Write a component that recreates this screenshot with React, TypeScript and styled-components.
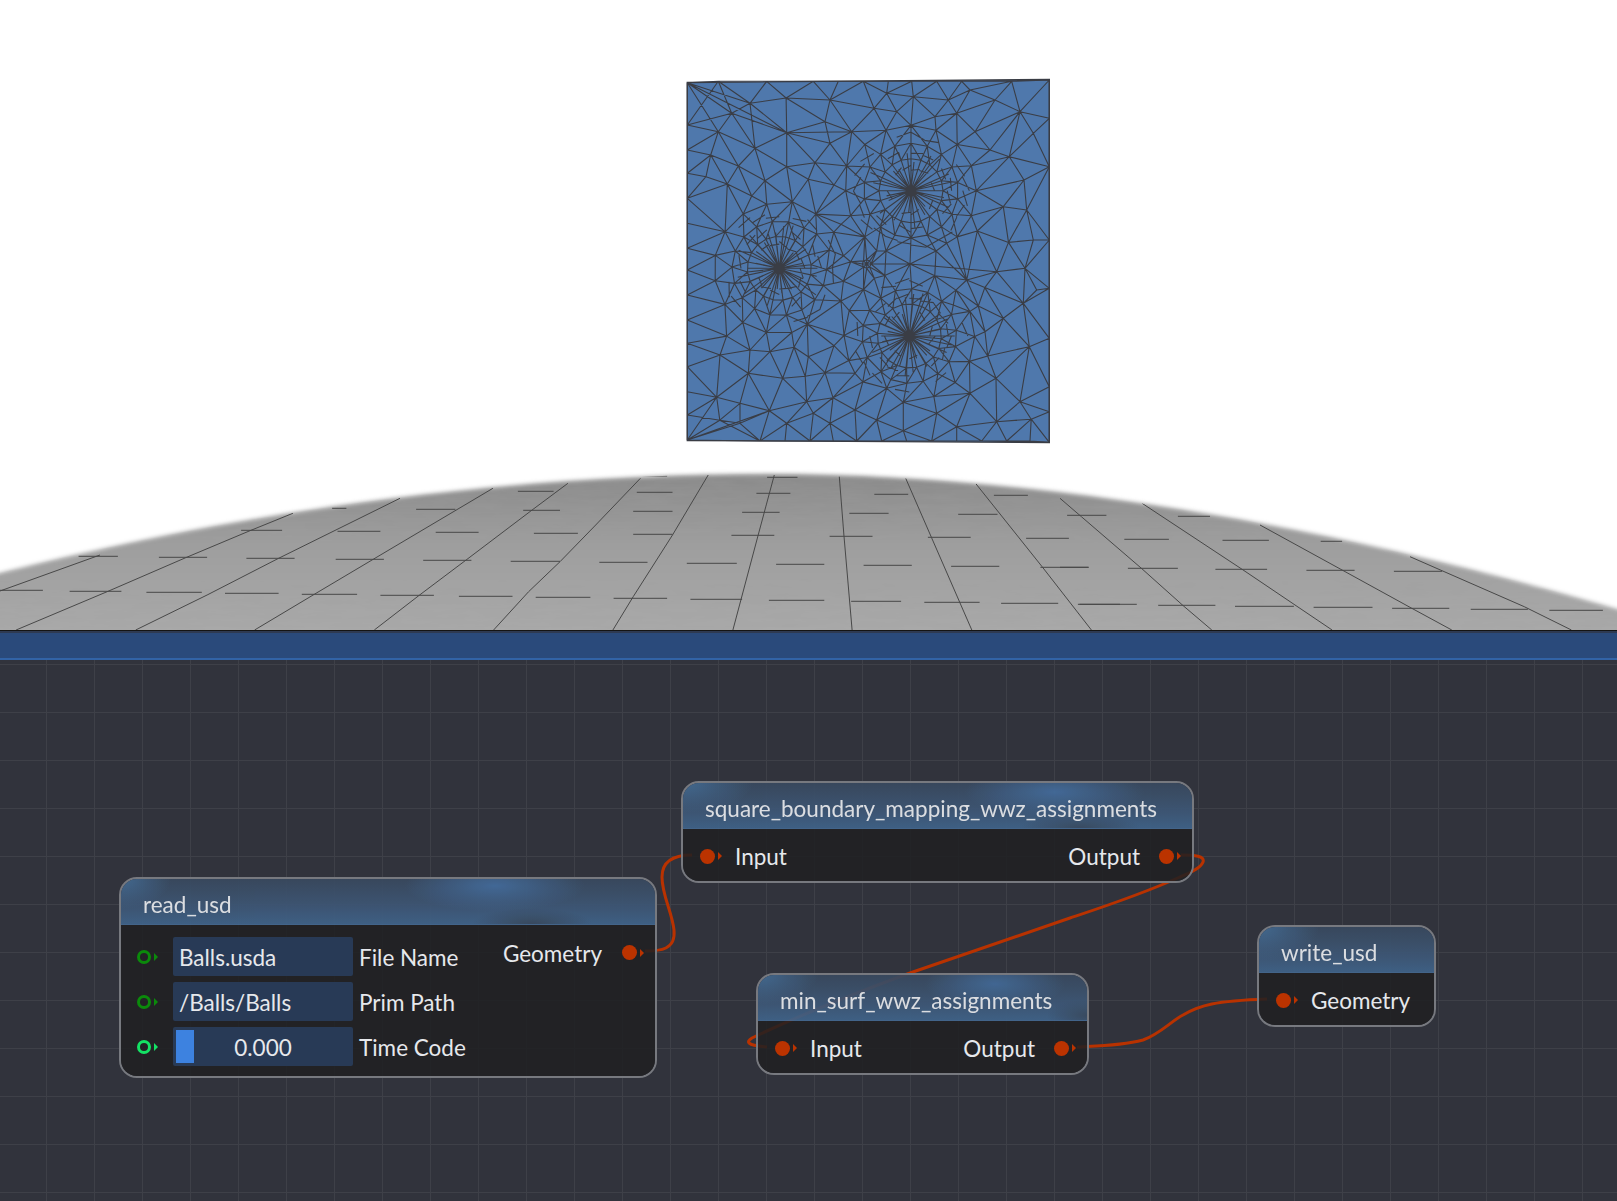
import React from "react";
import styled, { createGlobalStyle } from "styled-components";

const GlobalStyle = createGlobalStyle`
  html, body { margin: 0; padding: 0; background: #fff; }
  body { font-family: Lato, "Open Sans", sans-serif; overflow: hidden; }
`;

/* ---------- mesh generation (zoom coordinates: 0-1200 maps to a 400px crop) ---------- */
type P = [number, number];
const toX = (u: number) => 670 + u / 3;
const toY = (v: number) => 60 + v / 3;

function rng(seed: number) {
  let s = seed;
  return () => {
    s = (s * 16807) % 2147483647;
    return (s - 1) / 2147483646;
  };
}

const corners: P[] = [[52, 68], [1138, 60], [1138, 1147], [52, 1140]];
const hubs: P[] = [[723, 392], [328, 625], [718, 828]];
const manual: P[] = [
  [185,160],[350,218],[145,215],[255,265],[350,320],[480,120],[465,185],[240,130],[205,318],[122,285],[108,350],[172,372],
  [245,408],[285,362],[367,425],[415,358],[492,375],[435,308],[530,318],[480,250],[545,215],[650,100],[612,145],[680,155],
  [835,120],[975,120],[1050,155],[1018,290],[1062,360],[1070,450],[1000,440],[922,513],[830,550],[980,635],[1065,625],
  [1060,730],[1000,775],[890,660],[925,738],[850,735],[1078,860],[945,815],[953,888],[978,955],[1050,1025],[410,1025],
  [298,1052],[210,1030],[140,1012],[338,955],[235,940],[372,862],[415,890],[300,875],[240,870],[150,885],[412,793],
  [492,857],[465,938],[555,940],[633,935],[650,985],[700,1027],[555,1050],[430,1060],[480,1090],[350,1090],[210,1090],
  [700,1112],[513,493],[720,612],[513,723],[590,612],[620,572],[613,655],[542,605],[440,522],[478,570],[915,215],[860,160],
  [795,170],[730,110],[900,90],[1090,220],[960,270],[1090,540],[1100,690],[900,1000],[800,1060],[620,1080],[980,1085],[860,1100],
];
const edges: P[] = [
  ...[195,270,340,415,490,565,630,705,780,850,920,995,1065].map((v) => [52, v] as P),
  ...[145,290,430,505,580,655,725,800,875,1025].map((u) => [u, 64] as P),
  ...[175,320,540,685,835,980,1055].map((v) => [1138, v] as P),
  ...[270,345,420,490,560,635,710,785,860,935,1010,1080].map((u) => [u, 1143] as P),
];

function buildPoints(): P[] {
  const out: P[] = [...corners, ...hubs];
  const add = (p: P, d: number) => {
    for (const q of out) if (Math.hypot(p[0] - q[0], p[1] - q[1]) < d) return;
    out.push(p);
  };
  edges.forEach((p) => add(p, 10));
  manual.forEach((p) => add(p, 22));
  hubs.forEach((h, i) => {
    [[96, 20], [142, 18], [196, 16]].forEach(([r, n], ri) => {
      for (let k = 0; k < n; k++) {
        const a = ((k + (ri % 2) * 0.5) / n) * Math.PI * 2 + i * 0.2;
        add([h[0] + Math.cos(a) * r, h[1] + Math.sin(a) * r], 26);
      }
    });
  });
  for (let k = 0; k < 8; k++) {
    const a = (k / 8) * Math.PI * 2;
    add([590 + Math.cos(a) * 13, 612 + Math.sin(a) * 13], 6);
  }
  const r = rng(77);
  for (let v = 100; v < 1120; v += 66) {
    for (let u = 90; u < 1110; u += 66) {
      add([u + (r() - 0.5) * 30, v + (r() - 0.5) * 30], 58);
    }
  }
  return out;
}

function delaunay(pts: P[]): [number, number, number][] {
  const all: P[] = [...pts, [-5000, -5000], [7000, -5000], [600, 8000]];
  const n = pts.length;
  let tris: [number, number, number][] = [[n, n + 1, n + 2]];
  const inCircle = (t: [number, number, number], p: P) => {
    const [ax, ay] = all[t[0]];
    const [bx, by] = all[t[1]];
    const [cx, cy] = all[t[2]];
    const d = 2 * (ax * (by - cy) + bx * (cy - ay) + cx * (ay - by));
    const ux = ((ax * ax + ay * ay) * (by - cy) + (bx * bx + by * by) * (cy - ay) + (cx * cx + cy * cy) * (ay - by)) / d;
    const uy = ((ax * ax + ay * ay) * (cx - bx) + (bx * bx + by * by) * (ax - cx) + (cx * cx + cy * cy) * (bx - ax)) / d;
    return Math.hypot(p[0] - ux, p[1] - uy) < Math.hypot(ax - ux, ay - uy);
  };
  pts.forEach((p, i) => {
    const bad = tris.filter((t) => inCircle(t, p));
    const count = new Map<string, [number, number]>();
    const seen = new Map<string, number>();
    bad.forEach((t) => {
      ([[t[0], t[1]], [t[1], t[2]], [t[2], t[0]]] as [number, number][]).forEach(([a, b]) => {
        const key = a < b ? `${a}-${b}` : `${b}-${a}`;
        seen.set(key, (seen.get(key) || 0) + 1);
        count.set(key, [a, b]);
      });
    });
    tris = tris.filter((t) => !bad.includes(t));
    seen.forEach((c, key) => {
      if (c === 1) {
        const [a, b] = count.get(key)!;
        tris.push([a, b, i]);
      }
    });
  });
  return tris.filter((t) => t.every((v) => v < n));
}

function meshPath(): string {
  const pts = buildPoints();
  const tris = delaunay(pts);
  const done = new Set<string>();
  let d = "";
  const line = (a: P, b: P) => {
    d += `M${toX(a[0]).toFixed(1)} ${toY(a[1]).toFixed(1)}L${toX(b[0]).toFixed(1)} ${toY(b[1]).toFixed(1)}`;
  };
  tris.forEach((t) => {
    ([[t[0], t[1]], [t[1], t[2]], [t[2], t[0]]] as [number, number][]).forEach(([a, b]) => {
      const key = a < b ? `${a}-${b}` : `${b}-${a}`;
      if (done.has(key)) return;
      done.add(key);
      line(pts[a], pts[b]);
    });
  });
  /* dense spokes round the three hubs, crossed by broken zig-zag rings */
  const r = rng(901);
  hubs.forEach((h) => {
    for (let k = 0; k < 30; k++) {
      const a = (k / 30) * Math.PI * 2;
      const len = 62 + r() * 76;
      line(h, [h[0] + Math.cos(a) * len, h[1] + Math.sin(a) * len]);
    }
    [[72, 16], [118, 20], [165, 24]].forEach(([rad, n]) => {
      for (let k = 0; k < n; k++) {
        if (r() < 0.4) continue;
        const a = (k / n) * Math.PI * 2;
        const b = ((k + 1) / n) * Math.PI * 2;
        const r1 = rad + (r() - 0.5) * 22;
        const r2 = rad + (r() - 0.5) * 22;
        line([h[0] + Math.cos(a) * r1, h[1] + Math.sin(a) * r1], [h[0] + Math.cos(b) * r2, h[1] + Math.sin(b) * r2]);
      }
    });
  });
  const fans: [P, P][] = [
    [[52, 68], [185, 160]], [[52, 68], [145, 215]], [[52, 68], [240, 130]], [[52, 68], [350, 218]],
    [[52, 1140], [140, 1012]], [[52, 1140], [210, 1090]], [[52, 1140], [298, 1052]], [[1138, 60], [1050, 155]],
    [[590, 612], [720, 612]], [[720, 612], [980, 635]], [[350, 218], [350, 320]],
    [[350, 218], [185, 160]], [[350, 218], [540, 215]], [[922, 513], [980, 635]], [[980, 635], [1065, 625]],
  ];
  fans.forEach(([a, b]) => line(a, b));
  return d;
}

const MESH = meshPath();

/* ---------- ground ---------- */
const groundTop = "M-20 578 L0 573 C 250 510 510 474 770 474 C 1040 474 1340 528 1617 609 L1640 616 L1640 650 L-20 650 Z";

const poly = (off: number, pts: number[][]) =>
  "M" + pts.map(([x, y]) => `${(off + x / 2.8).toFixed(1)} ${(460 + y / 3).toFixed(1)}`).join("L");

const GROUND_LINES = [
  poly(0, [[0,393],[280,285]]),
  poly(0, [[45,510],[300,395],[520,293],[700,212],[820,160]]),
  poly(0, [[380,510],[580,405],[780,295],[1120,115]]),
  poly(0, [[713,510],[880,403],[1045,298],[1380,85]]),
  poly(0, [[1048,510],[1175,405],[1305,300],[1490,150],[1590,70]]),
  poly(0, [[1382,510],[1480,395],[1568,305]]),
  poly(560, [[0,305],[100,195],[225,55]]),
  poly(560, [[148,510],[205,410],[315,225],[415,45]]),
  poly(560, [[484,510],[555,225],[600,45]]),
  poly(560, [[818,510],[795,225],[782,50]]),
  poly(560, [[1153,510],[1040,232],[968,55]]),
  poly(560, [[1488,510],[1350,320],[1165,72]]),
  poly(1060, [[425,510],[345,437],[228,325],[60,170],[0,115]]),
  poly(1060, [[762,510],[510,328],[230,130]]),
  poly(1060, [[1097,510],[985,445],[790,330],[560,195]]),
  poly(1060, [[1432,510],[1300,440],[980,290]]),
].join("");

const tick = (off: number, rows: number[][]) =>
  rows.map(([a, b, y]) => `M${(off + a / 2.8).toFixed(1)} ${(460 + y / 3).toFixed(1)}H${(off + b / 2.8).toFixed(1)}`).join("");

const GROUND_TICKS =
  tick(0, [
    [0,120,391],[195,340,394],[410,565,397],[630,780,400],[845,1000,403],[1065,1215,406],[1285,1435,409],[1500,1568,412],
    [220,330,289],[445,580,292],[690,825,295],[940,1075,298],[1185,1320,301],[1430,1568,304],
    [675,790,211],[945,1065,214],[1220,1340,217],[1495,1568,220],
    [930,970,145],[1165,1275,148],[1465,1568,151],[1450,1550,94],
  ]) +
  tick(560, [
    [0,85,412],[150,300,415],[365,510,418],[585,740,421],[815,955,424],[1020,1175,427],[1235,1395,430],[1455,1568,433],
    [110,245,307],[355,495,310],[605,740,313],[850,985,316],[1095,1230,319],[1345,1480,322],
    [0,50,220],[205,315,223],[480,600,226],[755,875,229],[1030,1150,232],[1305,1425,235],
    [205,315,154],[510,615,157],[810,920,160],[1115,1225,163],[1420,1530,166],
    [215,315,97],[550,645,100],[880,975,103],[1215,1310,106],[580,665,52],[230,300,48],
  ]) +
  tick(1060, [
    [50,215,433],[275,435,436],[490,655,439],[710,875,442],[930,1090,445],[1150,1310,448],[1370,1520,451],
    [0,80,322],[190,330,325],[435,580,328],[690,825,331],[935,1070,334],
    [180,305,238],[455,585,241],[730,790,244],[330,420,169],
  ]);

/* ---------- styled parts ---------- */
const Page = styled.div`
  width: 1617px;
  height: 1201px;
  display: flex;
  flex-direction: column;
  overflow: hidden;
`;

const Viewport = styled.svg`
  display: block;
  flex: 0 0 630px;
  width: 1617px;
  height: 630px;
  background: #fff;
`;

const Splitter = styled.div`
  flex: 0 0 30px;
  box-sizing: border-box;
  background: #2a4a7b;
  border-top: 1.5px solid #141414;
  border-bottom: 2px solid #3263a6;
  box-shadow: inset 0 2px 0 #2e3a52;
`;

const GraphCanvas = styled.div`
  position: relative;
  flex: 1;
  background-color: #31333c;
  background-image:
    linear-gradient(to bottom, #3e4048 1.5px, transparent 1.5px),
    linear-gradient(to right, #3e4048 1.5px, transparent 1.5px);
  background-size: 48px 48px;
  background-position: 46px 4px;
`;

const WireLayer = styled.svg`
  position: absolute;
  left: 0;
  top: 0;
  width: 1617px;
  height: 541px;
`;

const Node = styled.div<{ $x: number; $y: number; $w: number }>`
  position: absolute;
  left: ${(p) => p.$x}px;
  top: ${(p) => p.$y - 660}px;
  width: ${(p) => p.$w}px;
  box-sizing: border-box;
  border: 2px solid #77797f;
  border-radius: 18px;
  overflow: hidden;
  color: #e6e8ec;
  font-size: 22.5px;
  line-height: 28px;
`;

const Header = styled.div<{ $glow: string }>`
  box-sizing: border-box;
  height: 46px;
  padding: 7px 0 0 22px;
  display: flex;
  align-items: center;
  background: ${(p) => p.$glow};
  opacity: 0.94;
  border-bottom: 1px solid #44688f;
`;

const Body = styled.div`
  background: rgba(32, 32, 34, 0.86);
  display: flex;
  justify-content: space-between;
`;

const SimpleBody = styled(Body)`
  box-sizing: border-box;
  height: 52px;
  align-items: center;
  padding: 2px 11px 0 17px;
`;

const InputColumn = styled.div`
  display: flex;
  flex-direction: column;
  gap: 6px;
  padding: 12px 0 10px 16px;
`;

const FieldRow = styled.div`
  display: flex;
  align-items: center;
  height: 39px;
`;

const OutputColumn = styled.div`
  padding: 8px 11px 0 0;
`;

const Port = styled.div<{ $gap: number }>`
  display: flex;
  align-items: center;
  height: 39px;
  gap: ${(p) => p.$gap}px;
`;

const SimplePort = styled(Port)`
  height: 30px;
`;

const PortText = styled.span`
  padding-top: 2px;
`;

const PinShape = styled.span`
  display: flex;
  align-items: center;
  gap: 3px;
  flex: none;
`;

const Dot = styled.i<{ $color: string }>`
  display: block;
  width: 15px;
  height: 15px;
  border-radius: 50%;
  background: ${(p) => p.$color};
`;

const Ring = styled.i<{ $color: string }>`
  display: block;
  box-sizing: border-box;
  width: 14px;
  height: 14px;
  border-radius: 50%;
  border: 3px solid ${(p) => p.$color};
`;

const Arrow = styled.i<{ $color: string }>`
  display: block;
  width: 0;
  height: 0;
  border-top: 4px solid transparent;
  border-bottom: 4px solid transparent;
  border-left: 4px solid ${(p) => p.$color};
`;

const Field = styled.div`
  position: relative;
  box-sizing: border-box;
  width: 180px;
  height: 39px;
  margin-left: 15px;
  padding: 2px 6px 0;
  border-radius: 2px;
  background: #283a56;
  display: flex;
  align-items: center;
`;

const SliderField = styled(Field)`
  justify-content: center;
`;

const SliderFill = styled.span`
  position: absolute;
  left: 3px;
  top: 3px;
  bottom: 3px;
  width: 18px;
  background: #3d82e0;
`;

const FieldLabel = styled.span`
  margin-left: 6px;
  padding-top: 2px;
`;

/* ---------- header glows ---------- */
const base = "linear-gradient(180deg, #39495f 0%, #3d5573 55%, #3f6288 100%)";
const READ_GLOW = `radial-gradient(ellipse 90px 26px at 70% 15%, #436c9c 0%, transparent 100%),
  radial-gradient(ellipse 60px 16px at 77% 100%, #394a60 0%, transparent 100%),
  radial-gradient(ellipse 50px 30px at 0% 0%, #436c96 0%, transparent 100%), ${base}`;
const SQUARE_GLOW = `radial-gradient(ellipse 90px 26px at 73% 20%, #436c9c 0%, transparent 100%),
  radial-gradient(ellipse 60px 14px at 78% 100%, #3a4c63 0%, transparent 100%),
  radial-gradient(ellipse 70px 30px at 0% 0%, #436c96 0%, transparent 100%), ${base}`;
const MIN_GLOW = `radial-gradient(ellipse 70px 26px at 72% 20%, #426a98 0%, transparent 100%),
  radial-gradient(ellipse 40px 16px at 100% 90%, #3a4c63 0%, transparent 100%),
  radial-gradient(ellipse 60px 30px at 0% 0%, #436c96 0%, transparent 100%), ${base}`;
const WRITE_GLOW = `radial-gradient(ellipse 60px 34px at 0% 0%, #436c96 0%, transparent 100%), ${base}`;

const RED = "#bb3300";
const DIM_GREEN = "#0b8a0b";
const BRIGHT_GREEN = "#14e264";

const OutPin = () => (
  <PinShape>
    <Dot $color={RED} />
    <Arrow $color={RED} />
  </PinShape>
);

const InPin = ({ color }: { color: string }) => (
  <PinShape>
    <Ring $color={color} />
    <Arrow $color={color} />
  </PinShape>
);

const fieldRows = [
  { color: DIM_GREEN, value: "Balls.usda", label: "File Name" },
  { color: DIM_GREEN, value: "/Balls/Balls", label: "Prim Path" },
];

const WIRES = [
  "M645 951 C 660 951 676 950 674 930 C 672 912 662 895 662 877 C 662 862 672 855 692 855",
  "M1181 855 C 1195 855 1205 856 1203 862 C 1201 868 1190 873 1180 877 C 1140 895 1100 908 1070 918 L 910 973 C 850 995 800 1015 752 1038 C 746 1042 746 1045 767 1047",
  "M1077 1047 C 1095 1046 1120 1046 1143 1040 C 1160 1034 1170 1022 1183 1015 C 1200 1005 1215 1001 1267 999",
];

export default function App() {
  return (
    <Page>
      <GlobalStyle />
      <Viewport viewBox="0 0 1617 630">
        <defs>
          <linearGradient id="ground" x1="0" y1="474" x2="0" y2="630" gradientUnits="userSpaceOnUse">
            <stop offset="0" stopColor="#8a8a8a" />
            <stop offset="0.45" stopColor="#9e9e9e" />
            <stop offset="1" stopColor="#a9a9a9" />
          </linearGradient>
          <filter id="soft" x="-2%" y="-5%" width="104%" height="110%">
            <feGaussianBlur stdDeviation="2" />
          </filter>
          <filter id="grain" x="0" y="0" width="100%" height="100%">
            <feTurbulence type="fractalNoise" baseFrequency="0.03 0.18" numOctaves="3" seed="4" />
            <feColorMatrix values="0 0 0 0 0.35  0 0 0 0 0.35  0 0 0 0 0.35  0.4 0 0 0 -0.12" />
          </filter>
          <clipPath id="groundClip">
            <path d={groundTop} />
          </clipPath>
        </defs>
        <path d={groundTop} fill="url(#ground)" filter="url(#soft)" />
        <g clipPath="url(#groundClip)">
          <rect x="0" y="470" width="1617" height="160" filter="url(#grain)" />
          <path d={GROUND_LINES} fill="none" stroke="#484848" strokeWidth="1" />
          <path d={GROUND_TICKS} fill="none" stroke="#484848" strokeWidth="1" />
        </g>
        <polygon points="687.3,82.5 1049.3,79.5 1049.3,442.5 687.3,440.5" fill="#4f78ac" stroke="#3a3d45" strokeWidth="1.4" />
        <path d={MESH} fill="none" stroke="#3a3d45" strokeWidth="1.1" />
      </Viewport>
      <Splitter />
      <GraphCanvas>
        <WireLayer viewBox="0 660 1617 541">
          {WIRES.map((d) => (
            <path key={d} d={d} fill="none" stroke="#b83200" strokeWidth="3" />
          ))}
        </WireLayer>

        <Node $x={119} $y={877} $w={538}>
          <Header $glow={READ_GLOW}>read_usd</Header>
          <Body>
            <InputColumn>
              {fieldRows.map((row) => (
                <FieldRow key={row.label}>
                  <InPin color={row.color} />
                  <Field>{row.value}</Field>
                  <FieldLabel>{row.label}</FieldLabel>
                </FieldRow>
              ))}
              <FieldRow>
                <InPin color={BRIGHT_GREEN} />
                <SliderField>
                  <SliderFill />
                  0.000
                </SliderField>
                <FieldLabel>Time Code</FieldLabel>
              </FieldRow>
            </InputColumn>
            <OutputColumn>
              <Port $gap={20}>
                <PortText>Geometry</PortText>
                <OutPin />
              </Port>
            </OutputColumn>
          </Body>
        </Node>

        <Node $x={681} $y={781} $w={513}>
          <Header $glow={SQUARE_GLOW}>square_boundary_mapping_wwz_assignments</Header>
          <SimpleBody>
            <SimplePort $gap={13}>
              <OutPin />
              <PortText>Input</PortText>
            </SimplePort>
            <SimplePort $gap={19}>
              <PortText>Output</PortText>
              <OutPin />
            </SimplePort>
          </SimpleBody>
        </Node>

        <Node $x={756} $y={973} $w={333}>
          <Header $glow={MIN_GLOW}>min_surf_wwz_assignments</Header>
          <SimpleBody>
            <SimplePort $gap={13}>
              <OutPin />
              <PortText>Input</PortText>
            </SimplePort>
            <SimplePort $gap={19}>
              <PortText>Output</PortText>
              <OutPin />
            </SimplePort>
          </SimpleBody>
        </Node>

        <Node $x={1257} $y={925} $w={179}>
          <Header $glow={WRITE_GLOW}>write_usd</Header>
          <SimpleBody>
            <SimplePort $gap={13}>
              <OutPin />
              <PortText>Geometry</PortText>
            </SimplePort>
          </SimpleBody>
        </Node>
      </GraphCanvas>
    </Page>
  );
}
